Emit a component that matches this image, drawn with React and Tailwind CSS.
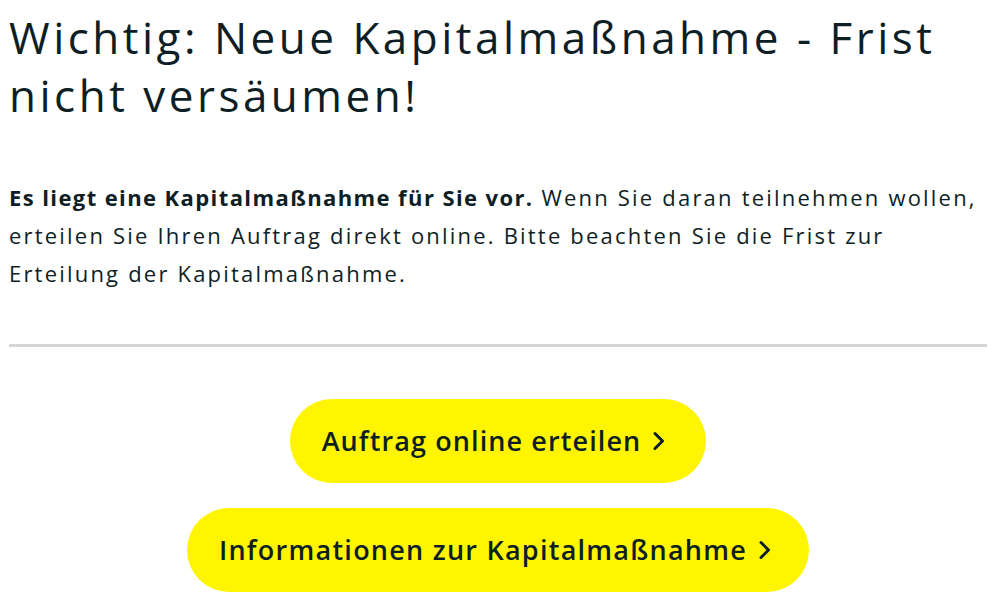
const Chevron = () => (
    <svg width="12" height="20" viewBox="0 0 12 20" fill="none" className="shrink-0">
        <path d="M2 2.5 L9.5 10 L2 17.5" stroke="currentColor" strokeWidth="3" strokeLinecap="round" strokeLinejoin="round" />
    </svg>
);

const App = () => {
    return (
        <div className="min-h-screen bg-white text-[#0e1e25] font-['Open_Sans',sans-serif] pl-[9px] pr-[12px]">

            {/* TITLE */}
            <h1 className="pt-[8px] text-[44px] leading-[58px] font-normal tracking-[3.5px]">
                Wichtig: Neue Kapitalmaßnahme - Frist nicht versäumen!
            </h1>

            {/* TEXT */}
            <p className="mt-[54px] text-[22px] leading-[38px] tracking-[2.2px]">
                <span className="font-bold tracking-[1.4px]">Es liegt eine Kapitalmaßnahme für Sie vor.</span>{" "}
                Wenn Sie daran teilnehmen wollen, erteilen Sie Ihren Auftrag direkt online. Bitte beachten Sie die Frist zur Erteilung der Kapitalmaßnahme.
            </p>

            <div className="mt-[52px] h-[3px] bg-[#d3d6d7]" />

            {/* BUTTONS */}
            <div className="flex flex-col items-center gap-[25px] pt-[52px]">

                <button className="h-[84px] pl-[32px] pr-[41px] rounded-full bg-[#fff500] flex items-center gap-[12px] text-[27px] font-semibold tracking-[1.1px]">
                    Auftrag online erteilen
                    <Chevron />
                </button>

                <button className="h-[84px] pl-[32px] pr-[38px] rounded-full bg-[#fff500] flex items-center gap-[12px] text-[27px] font-semibold tracking-[1.25px]">
                    Informationen zur Kapitalmaßnahme
                    <Chevron />
                </button>

            </div>

        </div>
    );
};

export default App;
